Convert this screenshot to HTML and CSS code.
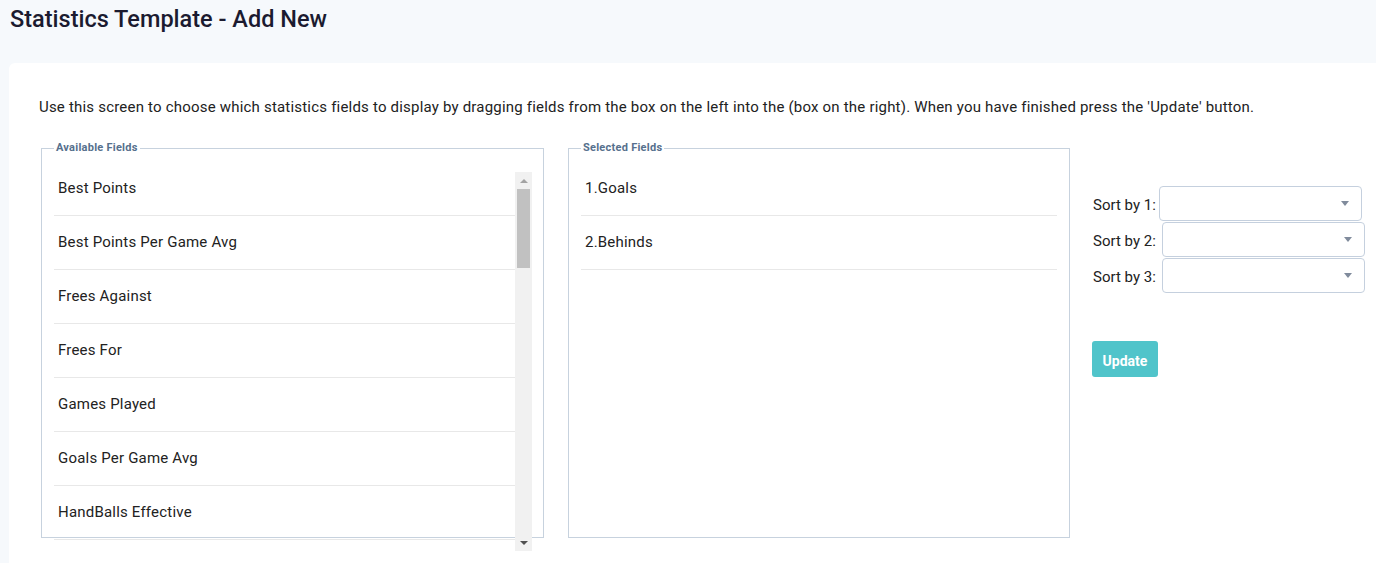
FILE: index.html
```html
<!DOCTYPE html>
<html>
<head>
<meta charset="utf-8">
<link rel="stylesheet" href="styles.css">
</head>
<body>
<header class="page-header">
  <h1 class="page-title">Statistics Template - Add New</h1>
</header>
<main class="card">
  <p class="intro">Use this screen to choose which statistics fields to display by dragging fields from the box on the left into the (box on the right). When you have finished press the 'Update' button.</p>
  <div class="builder">
    <fieldset class="field-box available">
      <legend class="field-legend">Available Fields</legend>
      <div class="scroll-area">
        <ul class="field-list">
          <li class="field-item">Best Points</li>
          <li class="field-item">Best Points Per Game Avg</li>
          <li class="field-item">Frees Against</li>
          <li class="field-item">Frees For</li>
          <li class="field-item">Games Played</li>
          <li class="field-item">Goals Per Game Avg</li>
          <li class="field-item">HandBalls Effective</li>
        </ul>
        <div class="scrollbar">
          <div class="sb-btn"><span class="sb-up"></span></div>
          <div class="sb-track"><div class="sb-thumb"></div></div>
          <div class="sb-btn"><span class="sb-down"></span></div>
        </div>
      </div>
    </fieldset>
    <fieldset class="field-box selected">
      <legend class="field-legend">Selected Fields</legend>
      <ul class="field-list selected-list">
        <li class="field-item">1.Goals</li>
        <li class="field-item">2.Behinds</li>
      </ul>
    </fieldset>
    <div class="sort-panel">
      <div class="sort-row"><span class="sort-label">Sort by 1:</span><div class="select"><span class="caret"></span></div></div>
      <div class="sort-row"><span class="sort-label wide">Sort by 2:</span><div class="select"><span class="caret"></span></div></div>
      <div class="sort-row"><span class="sort-label wide">Sort by 3:</span><div class="select"><span class="caret"></span></div></div>
      <button class="update-btn">Update</button>
    </div>
  </div>
</main>
</body>
</html>
```
FILE: styles.css
```css
* { box-sizing: border-box; }
html, body { margin: 0; padding: 0; }
body {
  background: #f6f9fc;
  font-family: Roboto, "Liberation Sans", sans-serif;
  color: #222;
  height: 563px;
  overflow: hidden;
}
.page-header {
  padding: 5px 0 30px 10px;
  height: 63px;
}
.page-title {
  margin: 0;
  font-size: 23.5px;
  line-height: 28px;
  font-weight: 500;
  color: #1b1b30;
}
.card {
  margin-left: 9px;
  background: #fff;
  border-top-left-radius: 6px;
  padding: 34px 0 0 30px;
  height: 500px;
}
.intro {
  margin: 0 0 24px 0;
  font-size: 15px;
  line-height: 20px;
  letter-spacing: 0.2px;
  color: #222;
}
.builder {
  display: flex;
  align-items: flex-start;
}
.field-box {
  margin: 0 2px;
  border: 1px solid #c7d2de;
  padding: 17px 11px 0 12px;
  height: 397px;
  min-width: 0;
}
.available { width: 503px; }
.selected { width: 502px; margin-left: 22px; padding-right: 12px; }
.field-legend {
  padding: 0 2px;
  font-size: 11px;
  line-height: 14px;
  font-weight: 700;
  letter-spacing: 0.25px;
  color: #56708d;
}
.scroll-area {
  display: flex;
  height: 379px;
}
.field-list {
  list-style: none;
  margin: 0;
  padding: 0;
  flex: 1;
  overflow: hidden;
}
.field-item {
  padding: 17px 3px 18px 4px;
  font-size: 15px;
  line-height: 18px;
  letter-spacing: 0.2px;
  border-bottom: 1px solid #e8e8e8;
}
.field-item:first-child { padding-top: 7px; }
.scrollbar {
  width: 17px;
  background: #f1f1f1;
  display: flex;
  flex-direction: column;
}
.sb-btn {
  height: 17px;
  display: flex;
  align-items: center;
  justify-content: center;
}
.sb-up {
  width: 0; height: 0;
  border-left: 4px solid transparent;
  border-right: 4px solid transparent;
  border-bottom: 4px solid #a3a3a3;
}
.sb-down {
  width: 0; height: 0;
  border-left: 4px solid transparent;
  border-right: 4px solid transparent;
  border-top: 4px solid #505050;
}
.sb-track { flex: 1; padding: 0 2px; }
.sb-thumb { height: 79px; background: #c1c1c1; }
.sort-panel {
  margin-left: 21px;
  margin-top: 44px;
  display: flex;
  flex-direction: column;
  align-items: flex-start;
}
.sort-row {
  display: flex;
  align-items: center;
  height: 36px;
}
.sort-label {
  font-size: 15px;
  margin-right: 3px;
  padding-top: 3px;
}
.sort-label.wide { margin-right: 6px; }
.select {
  width: 203px;
  height: 35px;
  border: 1px solid #c5d0de;
  border-radius: 4px;
  background: #fff;
  display: flex;
  align-items: center;
  justify-content: flex-end;
  padding-right: 12px;
}
.caret {
  width: 0; height: 0;
  border-left: 4px solid transparent;
  border-right: 4px solid transparent;
  border-top: 5px solid #808b9c;
}
.update-btn {
  margin-top: 48px;
  margin-left: -1px;
  width: 66px;
  height: 36px;
  border: none;
  border-radius: 3px;
  background: #50c4ca;
  color: #fff;
  font-family: Roboto, "Liberation Sans", sans-serif;
  font-weight: 700;
  font-size: 14px;
  padding: 3px 0 0 0;
}
```
